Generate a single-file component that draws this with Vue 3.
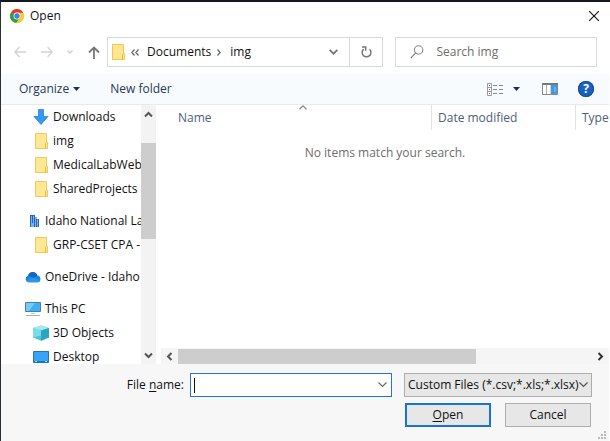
<script setup>
import { ref } from 'vue'

const groups = [
  [
    { icon: 'download', label: 'Downloads', child: true },
    { icon: 'folder', label: 'img', child: true },
    { icon: 'folder', label: 'MedicalLabWeb', child: true },
    { icon: 'folder', label: 'SharedProjects', child: true },
  ],
  [
    { icon: 'building', label: 'Idaho National La' },
    { icon: 'folder', label: 'GRP-CSET CPA -', child: true },
  ],
  [{ icon: 'cloud', label: 'OneDrive - Idaho' }],
  [
    { icon: 'pc', label: 'This PC' },
    { icon: 'cube', label: '3D Objects', child: true },
    { icon: 'desktop', label: 'Desktop', child: true },
  ],
]
const fileName = ref('')
const search = ref('')
</script>

<template>
  <main class="dialog">
    <header class="title">
      <svg width="14" height="14" viewBox="0 0 14 14">
        <circle cx="7" cy="7" r="7" fill="#fbc82f" />
        <path d="M7 7 .9 3.6A7 7 0 0 1 13.1 3.7z" fill="#e23b2e" />
        <path d="M7 7 .9 3.6A7 7 0 0 0 6.4 14L10 8.5z" fill="#2c9f4b" />
        <path d="M7 3.7h6.1A7 7 0 0 1 6.4 14L9.9 8.5z" fill="#fbc82f" />
        <circle cx="7" cy="7" r="3.4" fill="#fff" />
        <circle cx="7" cy="7" r="2.7" fill="#3b82f0" />
      </svg>
      <h1>Open</h1>
      <button class="bare close" aria-label="Close">
        <svg width="10" height="10" viewBox="0 0 10 10"><path d="M0 0 10 10M10 0 0 10" stroke="#111" stroke-width="1.1" /></svg>
      </button>
    </header>

    <nav class="navbar">
      <div class="arrows">
        <button class="bare" aria-label="Back">
          <svg width="12" height="12" viewBox="0 0 12 12" fill="none" stroke="#d4d4d4" stroke-width="1.4"><path d="M12 6H1M5.500 1 .9 6l4.600 5" /></svg>
        </button>
        <button class="bare" aria-label="Forward">
          <svg width="12" height="12" viewBox="0 0 12 12" fill="none" stroke="#d4d4d4" stroke-width="1.4"><path d="M0 6h11M6.500 1l4.600 5-4.600 5" /></svg>
        </button>
        <button class="bare" aria-label="Recent locations">
          <svg width="6" height="4" viewBox="0 0 6 4" fill="none" stroke="#ccc" stroke-width="1.3"><path d="M.5.500 3 3 5.500.5" /></svg>
        </button>
        <button class="bare" aria-label="Up">
          <svg width="12" height="13" viewBox="0 0 12 13" fill="none" stroke="#777" stroke-width="1.8"><path d="M6 13V1.500M1 6.500 6 1.500l5 5" /></svg>
        </button>
      </div>
      <div class="address">
        <svg width="13" height="16" viewBox="0 0 13 16"><path d="M.5.500h11v9h1v6H.5z" fill="#ffe68f" stroke="#f1c94f" /><path d="M10.500 15.500v-5l1-1" fill="none" stroke="#e9b83a" /></svg>
        <svg class="back" width="8" height="7" viewBox="0 0 8 7" fill="none" stroke="#666" stroke-width="1.2"><path d="M3.500.5.800 3.500l2.700 3M7.500.500 4.800 3.500l2.700 3" /></svg>
        <a href="#">Documents</a>
        <svg class="sep" width="4" height="7" viewBox="0 0 4 7" fill="none" stroke="#666" stroke-width="1.3"><path d="M.5.500l2.700 3-2.700 3" /></svg>
        <a href="#">img</a>
        <button class="bare drop" aria-label="Previous locations">
          <svg width="9" height="6" viewBox="0 0 9 6" fill="none" stroke="#777" stroke-width="1.8"><path d="M.6.800 4.500 4.700 8.400.8" /></svg>
        </button>
        <button class="bare refresh" aria-label="Refresh">
          <svg width="11" height="12" viewBox="0 0 11 12" fill="none" stroke="#777" stroke-width="1.500"><path d="M2.700 3.100A4.400 4.400 0 1 0 8.600 3.300M1 1h3.700v3.800" /></svg>
        </button>
      </div>
      <label class="search">
        <svg width="14" height="14" viewBox="0 0 14 14" fill="none" stroke="#8d8486" stroke-width="1.100"><circle cx="8.600" cy="5" r="4.200" /><path d="M5.700 8 .8 13" /></svg>
        <input v-model="search" type="text" placeholder="Search img" aria-label="Search img" />
      </label>
    </nav>

    <div class="toolbar">
      <button class="bare organize">Organize
        <svg width="7" height="4" viewBox="0 0 7 4"><path d="M0 0h7L3.500 4z" fill="#1a2f5c" /></svg>
      </button>
      <button class="bare">New folder</button>
      <div class="views">
        <button class="bare" aria-label="Change view">
          <svg width="16" height="13" viewBox="0 0 16 13">
            <path d="M.5.500h4v12h-4zM.5 4.500h4M.5 8.500h4" fill="#fff" stroke="#9a9a9a" />
            <path d="M6 2.500h4M12 2.500h4M6 6.500h4M12 6.500h4M6 10.500h4M12 10.500h4" stroke="#888" />
            <path d="M2 2h1v1H2zM2 6h1v1H2z" fill="#2a6fa8" /><path d="M2 10h1v1H2z" fill="#d33" />
          </svg>
        </button>
        <button class="bare more" aria-label="View options">
          <svg width="7" height="4" viewBox="0 0 7 4"><path d="M0 0h7L3.500 4z" fill="#1a2f5c" /></svg>
        </button>
        <button class="bare pane" aria-label="Show the preview pane">
          <svg width="16" height="12" viewBox="0 0 16 12">
            <path d="M.5.500h15v11H.5z" fill="#fff" stroke="#888" /><path d="M0 0h16v2H0z" fill="#777" /><path d="M4.500 2v9M9 2v9" stroke="#aaa" /><path d="M9 2h6v9H9z" fill="#3d9be6" /><path d="M12 4h2v5h-2z" fill="#63b5f2" />
          </svg>
        </button>
        <button class="bare help" aria-label="Help">?</button>
      </div>
    </div>

    <div class="body">
      <div class="side">
        <div class="tree">
          <ul v-for="(group, g) in groups" :key="g">
            <li v-for="item in group" :key="item.label" :class="{ child: item.child }">
              <svg v-if="item.icon === 'download'" width="16" height="16" viewBox="0 0 16 16"><path d="M5.500.5h5v7h4.500L8 15.500 1 7.500h4.500z" fill="#3399ee" stroke="#2686d6" stroke-width=".8" /></svg>
              <svg v-else-if="item.icon === 'folder'" width="16" height="16" viewBox="0 0 16 16"><path d="M2.500.500h11v9h1v6h-12z" fill="#ffe793" stroke="#efc95c" /><path d="M12.500 15.500v-5l1-1" fill="none" stroke="#e8bb45" /></svg>
              <svg v-else-if="item.icon === 'building'" width="16" height="16" viewBox="0 0 16 16"><path d="M5 2h4v12H5zM10 4h2v2h2v8h-4z" fill="#7fb0e6" /><path d="M5 2h1v12H5zM7 2h1v8H7zM9 3h1v11H9zM11 6h1v8h-1zM13 6h1v8h-1zM5 2h5v1H5z" fill="#1f66c0" /></svg>
              <svg v-else-if="item.icon === 'cloud'" width="16" height="16" viewBox="0 0 16 16"><path d="M3.500 13.200a3.300 3.300 0 0 1-.6-6.400Q4.200 3 7.700 3q3.400 0 4.700 3.500a3.400 3.400 0 0 1 .4 6.700z" fill="#1b87dc" /><path d="M3.200 6.600Q4.400 3 7.700 3q3.400 0 4.700 3.500L8.500 8.800z" fill="#1763bd" /><path d="M.9 11.800 8 8.500l7.300 3.200q-.8 1.500-2.500 1.500H3.500q-1.800 0-2.600-1.400z" fill="#2c97e8" /></svg>
              <svg v-else-if="item.icon === 'pc'" width="16" height="16" viewBox="0 0 16 16"><path d="M.5 1.500h15v9H.5z" fill="#3db1f2" stroke="#4a7ea6" /><path d="M1 2h9L4 10H1z" fill="#72cbfa" /><path d="M6 12.500h4" stroke="#c0c9cf" /><path d="M1 14.500h14" stroke="#9fb2bd" /></svg>
              <svg v-else-if="item.icon === 'cube'" width="16" height="16" viewBox="0 0 16 16"><path d="M0 3 8 .5 16 3v9.500L8 15.800 0 12.500z" fill="#52c2d6" /><path d="M0 3 8 .5 16 3 8 5.500z" fill="#a5e8f2" /><path d="M8 5.500 16 3v9.500l-8 3.300z" fill="#2aa5bd" /><path d="M0 3 8 5.500v5L0 12.500z" fill="#7adbe9" /></svg>
              <svg v-else width="16" height="16" viewBox="0 0 16 16"><path d="M.5 2.500h15v11H.5z" fill="#38a4f8" stroke="#2870b8" /><path d="M1 12h14v1H1z" fill="#1670c4" /><path d="M2 12.500h2M12 12.500h2" stroke="#a8dcff" /></svg>
              <span>{{ item.label }}</span>
            </li>
          </ul>
        </div>
        <div class="vscroll">
          <svg width="9" height="7" viewBox="0 0 9 7" fill="none" stroke="#555" stroke-width="2"><path d="M1 5.500 4.500 2 8 5.500" /></svg>
          <div class="track"><div class="thumb"></div></div>
          <svg width="9" height="7" viewBox="0 0 9 7" fill="none" stroke="#555" stroke-width="2"><path d="M1 1.500 4.500 5 8 1.500" /></svg>
        </div>
      </div>

      <section class="files">
        <div class="list">
          <table>
            <thead>
              <tr>
                <th class="name">Name
                  <svg class="sort" width="8" height="5" viewBox="0 0 8 5" fill="none" stroke="#888" stroke-width="1.300"><path d="M.5 4.200 4 .9l3.500 3.300" /></svg>
                </th>
                <th class="date">Date modified</th>
                <th class="type">Type</th>
              </tr>
            </thead>
            <tbody>
              <tr><td colspan="3">No items match your search.</td></tr>
            </tbody>
          </table>
        </div>
        <div class="hscroll">
          <svg width="7" height="9" viewBox="0 0 7 9" fill="none" stroke="#555" stroke-width="2"><path d="M5.500 1 2 4.500 5.500 8" /></svg>
          <div class="track"><div class="thumb"></div></div>
          <svg width="7" height="9" viewBox="0 0 7 9" fill="none" stroke="#333" stroke-width="2"><path d="M1.500 1 5 4.500 1.500 8" /></svg>
        </div>
      </section>
    </div>

    <form class="footer" @submit.prevent>
      <div class="line">
        <label for="file-name">File <u>n</u>ame:</label>
        <div class="combo">
          <i class="caret"></i>
          <input id="file-name" v-model="fileName" type="text" autocomplete="off" />
          <button type="button" class="bare" aria-label="Show file names">
            <svg width="9" height="6" viewBox="0 0 9 6" fill="none" stroke="#666" stroke-width="1.200"><path d="M.5.500l4 4 4-4" /></svg>
          </button>
        </div>
        <div class="filter">
          <select aria-label="File type"><option>Custom Files (*.csv;*.xls;*.xlsx)</option></select>
          <svg width="9" height="6" viewBox="0 0 9 6" fill="none" stroke="#555" stroke-width="1.200"><path d="M.5.500l4 4 4-4" /></svg>
        </div>
      </div>
      <div class="actions">
        <button class="push primary"><span><u>O</u>pen</span></button>
        <button type="button" class="push">Cancel</button>
      </div>
      <svg class="grip" width="9" height="9" viewBox="0 0 9 9"><path d="M6 0h2v2H6zM3 3h2v2H3zM6 3h2v2H6zM0 6h2v2H0zM3 6h2v2H3zM6 6h2v2H6z" fill="#bbb" /></svg>
    </form>
  </main>
</template>

<style>
body {
  margin: 0;
  background: #fff;
}
</style>

<style scoped>
.dialog {
  display: flex;
  flex-direction: column;
  height: 100vh;
  box-sizing: border-box;
  padding-right: 1px;
  border-top: 2px solid #14171f;
  border-left: 1px solid #2b2f38;
  background: #fff;
  color: #111;
  font: 12px/16px "Open Sans", "Noto Sans", sans-serif;
  overflow: hidden;
}
svg {
  display: block;
  flex: none;
}
input,
select,
button {
  font: inherit;
  color: inherit;
}
input {
  min-width: 0;
  border: 0;
  padding: 0;
  outline: 0;
  background: transparent;
}
a {
  color: inherit;
  text-decoration: none;
}
u {
  text-underline-offset: 2px;
}
.bare {
  display: flex;
  align-items: center;
  padding: 0;
  border: 0;
  background: none;
}
.title {
  display: flex;
  align-items: center;
  height: 28px;
  padding: 0 10px 0 9px;
  gap: 6px;
}
h1 {
  margin: 0;
  font-size: 12px;
  font-weight: 400;
}
.close {
  margin-left: auto;
}
.navbar {
  display: flex;
  align-items: center;
  height: 44px;
  padding-right: 12px;
}
.arrows {
  display: flex;
  flex: none;
  align-items: center;
  justify-content: space-between;
  width: 86px;
  padding: 0 7px 0 13px;
}
.address,
.search {
  display: flex;
  align-items: center;
  height: 30px;
  min-width: 0;
  box-sizing: border-box;
  border: 1px solid #d9d9d9;
}
.address {
  flex: 1 1 277px;
  padding-left: 4px;
}
.back {
  margin: 0 8px 0 6px;
}
.sep {
  margin: 0 9px 0 6px;
}
.drop {
  margin-left: auto;
  padding-right: 11px;
}
.refresh {
  align-self: stretch;
  justify-content: center;
  width: 33px;
  border-left: 1px solid #d9d9d9;
}
.search {
  flex: 1 1 202px;
  margin-left: 12px;
  padding-left: 14px;
  gap: 12px;
}
.search input {
  flex: 1;
}
.search input::placeholder {
  color: #6d6d6d;
  opacity: 1;
}
.toolbar {
  display: flex;
  align-items: center;
  height: 30px;
  padding: 0 15px 0 18px;
  gap: 30px;
  border-bottom: 1px solid #e4ebf0;
  background: #f8fbfe;
  color: #1e395b;
}
.organize {
  gap: 4px;
}
.views {
  display: flex;
  align-items: center;
  margin-left: auto;
}
.more {
  margin: 0 22px 0 10px;
}
.pane {
  margin-right: 20px;
}
.help {
  justify-content: center;
  width: 16px;
  height: 16px;
  border-radius: 50%;
  background: #1b62c0;
  box-shadow: inset 0 0 0 1px #124a98;
  color: #fff;
  font-weight: 700;
}
.body {
  display: flex;
  flex: 1;
  min-height: 0;
}
.side {
  display: flex;
  flex: none;
  width: 155px;
}
.tree {
  flex: 1;
  min-width: 0;
  overflow: hidden;
}
ul {
  margin: 0 0 8px;
  padding: 0;
  list-style: none;
}
li {
  display: flex;
  align-items: center;
  gap: 4px;
  height: 24px;
  padding-left: 24px;
  white-space: nowrap;
}
.child {
  padding-left: 32px;
}
.vscroll {
  display: flex;
  flex-direction: column;
  align-items: center;
  width: 15px;
  padding: 6px 0 5px;
  gap: 4px;
  background: #f3f3f3;
}
.vscroll .track {
  flex: 1;
  width: 100%;
  padding-top: 21px;
  box-sizing: border-box;
}
.vscroll .thumb {
  height: 47%;
  background: #cdcdcd;
}
.files {
  display: flex;
  flex: 1;
  min-width: 0;
  flex-direction: column;
  margin-left: 5px;
}
.list {
  flex: 1;
  overflow: hidden;
}
table {
  width: 100%;
  table-layout: fixed;
  border-collapse: collapse;
}
th {
  height: 25px;
  padding: 0 0 0 6px;
  text-align: left;
  font-weight: 400;
  color: #4c607a;
  white-space: nowrap;
}
th + th {
  border-left: 1px solid #e2e2e2;
}
.name {
  position: relative;
  padding-left: 17px;
}
.sort {
  position: absolute;
  top: 0;
  left: 51%;
}
.date {
  width: 137px;
}
.type {
  width: 27px;
}
td {
  padding: 15px 0 0;
  text-align: center;
  color: #6d6d6d;
}
.hscroll {
  display: flex;
  align-items: center;
  height: 16px;
  padding: 0 5px;
  gap: 5px;
  background: #f5f5f5;
}
.hscroll .track {
  flex: 1;
  height: 15px;
}
.hscroll .thumb {
  width: 72%;
  height: 100%;
  background: #cdcdcd;
}
.footer {
  position: relative;
  height: 77px;
  box-sizing: border-box;
  padding: 9px 17px 0 0;
  background: #f7f7f7;
}
.line {
  display: flex;
  align-items: center;
}
.line label {
  flex: none;
  width: 183px;
  margin-right: 6px;
  text-align: right;
}
.combo {
  display: flex;
  align-items: center;
  flex: 1 1 202px;
  min-width: 0;
  height: 24px;
  box-sizing: border-box;
  padding: 0 4px 0 3px;
  border: 1px solid #2474d8;
  background: #fff;
}
.caret {
  width: 1px;
  height: 15px;
  background: #111;
}
.combo input {
  flex: 1;
}
.filter {
  display: grid;
  grid-template-columns: minmax(0, 1fr);
  align-items: center;
  flex: 1 1 188px;
  min-width: 0;
  margin-left: 12px;
}
.filter > * {
  grid-area: 1 / 1;
}
.filter svg {
  justify-self: end;
  margin-right: 4px;
  pointer-events: none;
}
select {
  width: 100%;
  height: 24px;
  padding: 0 0 0 3px;
  appearance: none;
  border: 1px solid #adadad;
  border-radius: 0;
  background: #e7e7e7;
}
.actions {
  display: flex;
  justify-content: flex-end;
  gap: 14px;
  padding: 6px 1px 0 0;
}
.push {
  width: 86px;
  height: 24px;
  padding: 0;
  border: 1px solid #adadad;
  background: #e7e7e7;
}
.primary {
  border: 2px solid #1873d8;
}
.grip {
  position: absolute;
  right: 2px;
  bottom: 1px;
}
</style>
